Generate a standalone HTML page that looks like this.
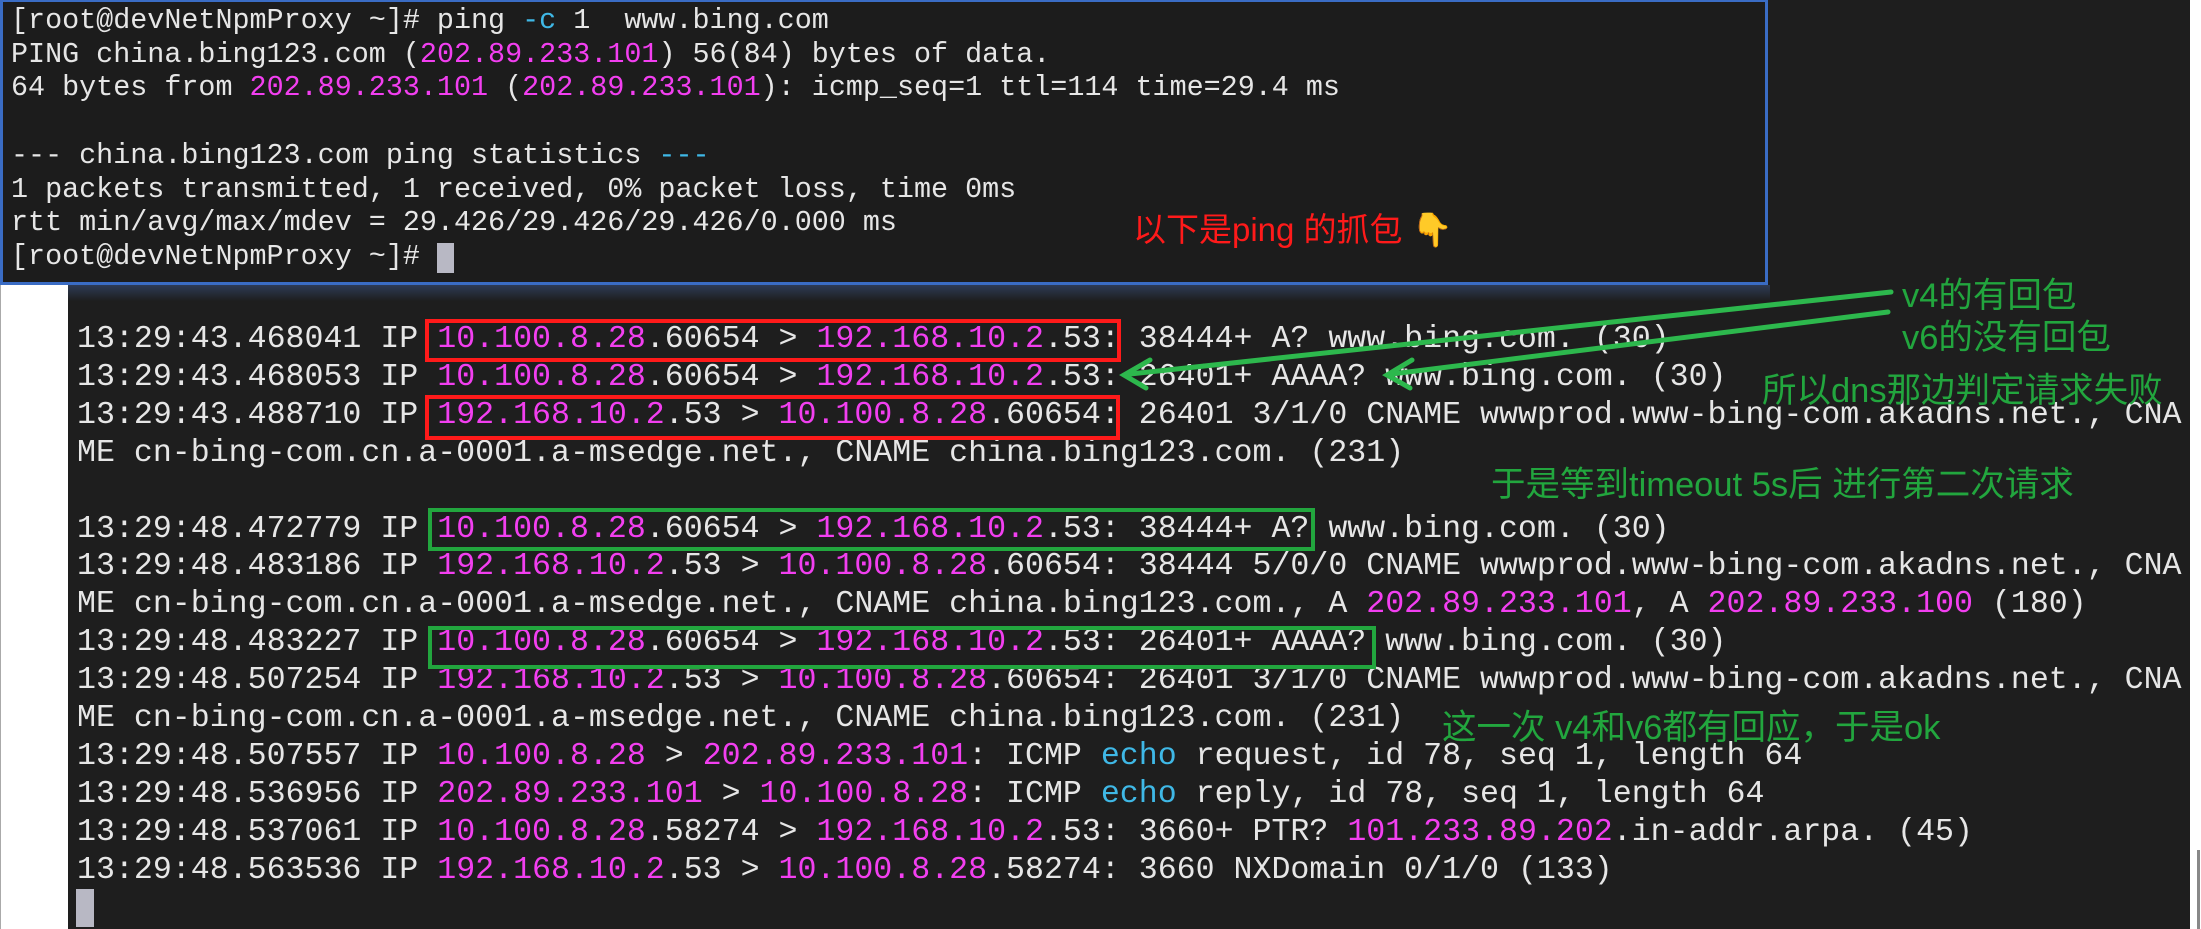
<!DOCTYPE html>
<html><head><meta charset="utf-8">
<style>
html,body{margin:0;padding:0;}
body{width:2201px;height:929px;position:relative;overflow:hidden;background:#fff;}
.t{position:absolute;white-space:pre;font-family:"Liberation Mono","DejaVu Sans Mono",monospace;color:#e6e6e6;}
.m{color:#f23ff0;}
.c{color:#3fb8e6;}
.low{font-size:31.6px;line-height:37.9px;left:77px;}
.top{font-size:28.4px;line-height:33.7px;left:11px;}
.box{position:absolute;border:4px solid;box-sizing:border-box;}
.r{border-color:#ff1a1a;}
.g{border-color:#22a63e;}
.ann{position:absolute;white-space:pre;font-family:"Liberation Sans","Noto Sans CJK SC",sans-serif;}
</style></head><body>
<div style="position:absolute;left:68px;top:0;width:2122px;height:929px;background:#1e1e1e;"></div>
<div style="position:absolute;left:0;top:285px;width:1px;height:644px;background:#aaa;"></div>
<div style="position:absolute;left:2197px;top:850px;width:3px;height:79px;background:#888;"></div>
<div style="position:absolute;left:0;top:0;width:1768px;height:285px;background:#1c1c1c;border:3px solid #3a6cc4;border-top-width:2px;box-sizing:border-box;"></div>
<div style="position:absolute;left:68px;top:285px;width:1702px;height:16px;background:linear-gradient(#2e3b55,#1e1e1e);"></div>
<div class="t top" style="top:4px;">[root@devNetNpmProxy ~]# ping <span class="c">-c</span> 1  www.bing.com
PING china.bing123.com (<span class="m">202.89.233.101</span>) 56(84) bytes of data.
64 bytes from <span class="m">202.89.233.101</span> (<span class="m">202.89.233.101</span>): icmp_seq=1 ttl=114 time=29.4 ms

--- china.bing123.com ping statistics <span class="c">---</span>
1 packets transmitted, 1 received, 0% packet loss, time 0ms
rtt min/avg/max/mdev = 29.426/29.426/29.426/0.000 ms
[root@devNetNpmProxy ~]# </div>
<div style="position:absolute;left:437px;top:243px;width:17px;height:30px;background:#b8b8c4;"></div>

<div class="t low" style="top:321px;">13:29:43.468041 IP <span class="m">10.100.8.28</span>.60654 &gt; <span class="m">192.168.10.2</span>.53: 38444+ A? www.bing.com. (30)
13:29:43.468053 IP <span class="m">10.100.8.28</span>.60654 &gt; <span class="m">192.168.10.2</span>.53: 26401+ AAAA? www.bing.com. (30)
13:29:43.488710 IP <span class="m">192.168.10.2</span>.53 &gt; <span class="m">10.100.8.28</span>.60654: 26401 3/1/0 CNAME wwwprod.www-bing-com.akadns.net., CNA
ME cn-bing-com.cn.a-0001.a-msedge.net., CNAME china.bing123.com. (231)

13:29:48.472779 IP <span class="m">10.100.8.28</span>.60654 &gt; <span class="m">192.168.10.2</span>.53: 38444+ A? www.bing.com. (30)
13:29:48.483186 IP <span class="m">192.168.10.2</span>.53 &gt; <span class="m">10.100.8.28</span>.60654: 38444 5/0/0 CNAME wwwprod.www-bing-com.akadns.net., CNA
ME cn-bing-com.cn.a-0001.a-msedge.net., CNAME china.bing123.com., A <span class="m">202.89.233.101</span>, A <span class="m">202.89.233.100</span> (180)
13:29:48.483227 IP <span class="m">10.100.8.28</span>.60654 &gt; <span class="m">192.168.10.2</span>.53: 26401+ AAAA? www.bing.com. (30)
13:29:48.507254 IP <span class="m">192.168.10.2</span>.53 &gt; <span class="m">10.100.8.28</span>.60654: 26401 3/1/0 CNAME wwwprod.www-bing-com.akadns.net., CNA
ME cn-bing-com.cn.a-0001.a-msedge.net., CNAME china.bing123.com. (231)
13:29:48.507557 IP <span class="m">10.100.8.28</span> &gt; <span class="m">202.89.233.101</span>: ICMP <span class="c">echo</span> request, id 78, seq 1, length 64
13:29:48.536956 IP <span class="m">202.89.233.101</span> &gt; <span class="m">10.100.8.28</span>: ICMP <span class="c">echo</span> reply, id 78, seq 1, length 64
13:29:48.537061 IP <span class="m">10.100.8.28</span>.58274 &gt; <span class="m">192.168.10.2</span>.53: 3660+ PTR? <span class="m">101.233.89.202</span>.in-addr.arpa. (45)
13:29:48.563536 IP <span class="m">192.168.10.2</span>.53 &gt; <span class="m">10.100.8.28</span>.58274: 3660 NXDomain 0/1/0 (133)</div>
<div style="position:absolute;left:76px;top:889px;width:18px;height:38px;background:#b8b8c4;"></div>

<div class="box r" style="left:425px;top:319px;width:696px;height:43px;"></div>
<div class="box r" style="left:425px;top:395px;width:695px;height:45px;"></div>
<div class="box g" style="left:428px;top:508px;width:887px;height:43px;"></div>
<div class="box g" style="left:428px;top:626px;width:948px;height:43px;"></div>

<svg style="position:absolute;left:0;top:0" width="2201" height="929">
<g stroke="#2db84d" stroke-width="5" fill="none" stroke-linecap="round">
<line x1="1891" y1="292" x2="1130" y2="374"/>
<polyline points="1150,360 1124,375 1146,388"/>
<line x1="1888" y1="312" x2="1392" y2="374"/>
<polyline points="1412,360 1387,375 1410,388"/>
</g></svg>

<div class="ann" style="left:1133px;top:203px;font-size:33px;color:#ff1a1a;">以下是ping 的抓包 👇</div>
<div class="ann" style="left:1902px;top:267px;font-size:34.5px;color:#22a63e;">v4的有回包</div>
<div class="ann" style="left:1902px;top:309px;font-size:34.5px;color:#22a63e;">v6的没有回包</div>
<div class="ann" style="left:1762px;top:362px;font-size:34.5px;color:#22a63e;">所以dns那边判定请求失败</div>
<div class="ann" style="left:1491px;top:456px;font-size:34.5px;color:#22a63e;">于是等到timeout 5s后 进行第二次请求</div>
<div class="ann" style="left:1442px;top:699px;font-size:34.5px;color:#22a63e;">这一次 v4和v6都有回应，于是ok</div>
</body></html>
